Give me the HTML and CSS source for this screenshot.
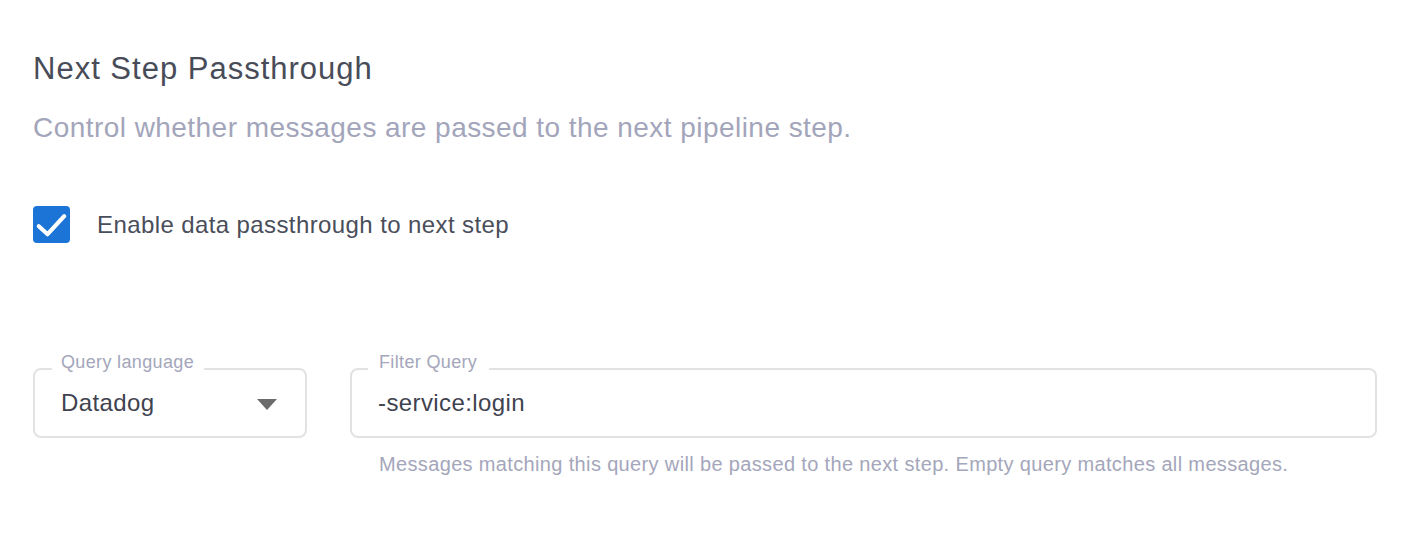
FILE: index.html
```html
<!DOCTYPE html>
<html lang="en">
<head>
<meta charset="utf-8">
<title>Next Step Passthrough</title>
<link rel="stylesheet" href="styles.css">
</head>
<body>
<section class="panel">
  <h2 class="title">Next Step Passthrough</h2>
  <p class="subtitle">Control whether messages are passed to the next pipeline step.</p>

  <label class="check-row">
    <span class="checkbox">
      <svg width="37" height="37" viewBox="0 0 37 37" aria-hidden="true">
        <path d="M5.8 20.2 L14.6 28.2 L31.2 10.2" fill="none" stroke="#ffffff" stroke-width="4.2" stroke-linecap="round" stroke-linejoin="round"/>
      </svg>
    </span>
    <span class="check-label">Enable data passthrough to next step</span>
  </label>

  <div class="fields">
    <div class="field field-select">
      <span class="field-label">Query language</span>
      <span class="field-value">Datadog</span>
      <span class="caret"></span>
    </div>
    <div class="field-col">
      <div class="field field-query">
        <span class="field-label">Filter Query</span>
        <span class="field-value">-service:login</span>
      </div>
      <p class="helper">Messages matching this query will be passed to the next step. Empty query matches all messages.</p>
    </div>
  </div>
</section>
</body>
</html>
```

FILE: styles.css
```css
* { box-sizing: border-box; }

html, body {
  margin: 0;
  padding: 0;
  background: #ffffff;
}

body {
  font-family: "Liberation Sans", Arial, Helvetica, sans-serif;
}

.panel {
  padding: 51px 43px 0 33px;
}

.title {
  margin: 0;
  font-size: 31px;
  line-height: 36px;
  letter-spacing: 1px;
  font-weight: 400;
  color: #484c58;
}

.subtitle {
  margin: 25px 0 0;
  font-size: 28px;
  line-height: 32px;
  letter-spacing: 0.45px;
  color: #a3a5bb;
}

.check-row {
  display: flex;
  align-items: center;
  gap: 27px;
  margin-top: 62px;
  height: 37px;
}

.checkbox {
  width: 37px;
  height: 37px;
  flex: 0 0 37px;
  border-radius: 4px;
  background: #1b74d6;
  display: block;
}

.checkbox svg { display: block; }

.check-label {
  font-size: 24px;
  line-height: 32px;
  letter-spacing: 0.4px;
  color: #4a4e5a;
}

.fields {
  display: flex;
  align-items: flex-start;
  gap: 43px;
  margin-top: 125px;
}

.field {
  position: relative;
  height: 70px;
  border: 2px solid #e2e2e5;
  border-radius: 8px;
  display: flex;
  align-items: center;
  padding: 0 28px 1px 26px;
}

.field-select {
  width: 274px;
  flex: 0 0 274px;
  justify-content: space-between;
}

.field-col {
  flex: 1 1 auto;
}

.field-label {
  position: absolute;
  top: -20px;
  left: 17px;
  padding: 0 10px 0 9px;
  background: #ffffff;
  font-size: 18px;
  line-height: 24px;
  letter-spacing: 0.35px;
  color: #a4a6bb;
}

.field-query .field-label {
  left: 16px;
  padding: 0 12px 0 11px;
}

.field-value {
  font-size: 24px;
  line-height: 32px;
  letter-spacing: 0.4px;
  color: #3f4350;
}

.caret {
  width: 0;
  height: 0;
  border-left: 10px solid transparent;
  border-right: 10px solid transparent;
  border-top: 11px solid #6b6b6b;
  margin-top: 3px;
}

.helper {
  margin: 14px 0 0 29px;
  font-size: 20px;
  line-height: 24px;
  letter-spacing: 0.35px;
  color: #a4a6bb;
}
```
